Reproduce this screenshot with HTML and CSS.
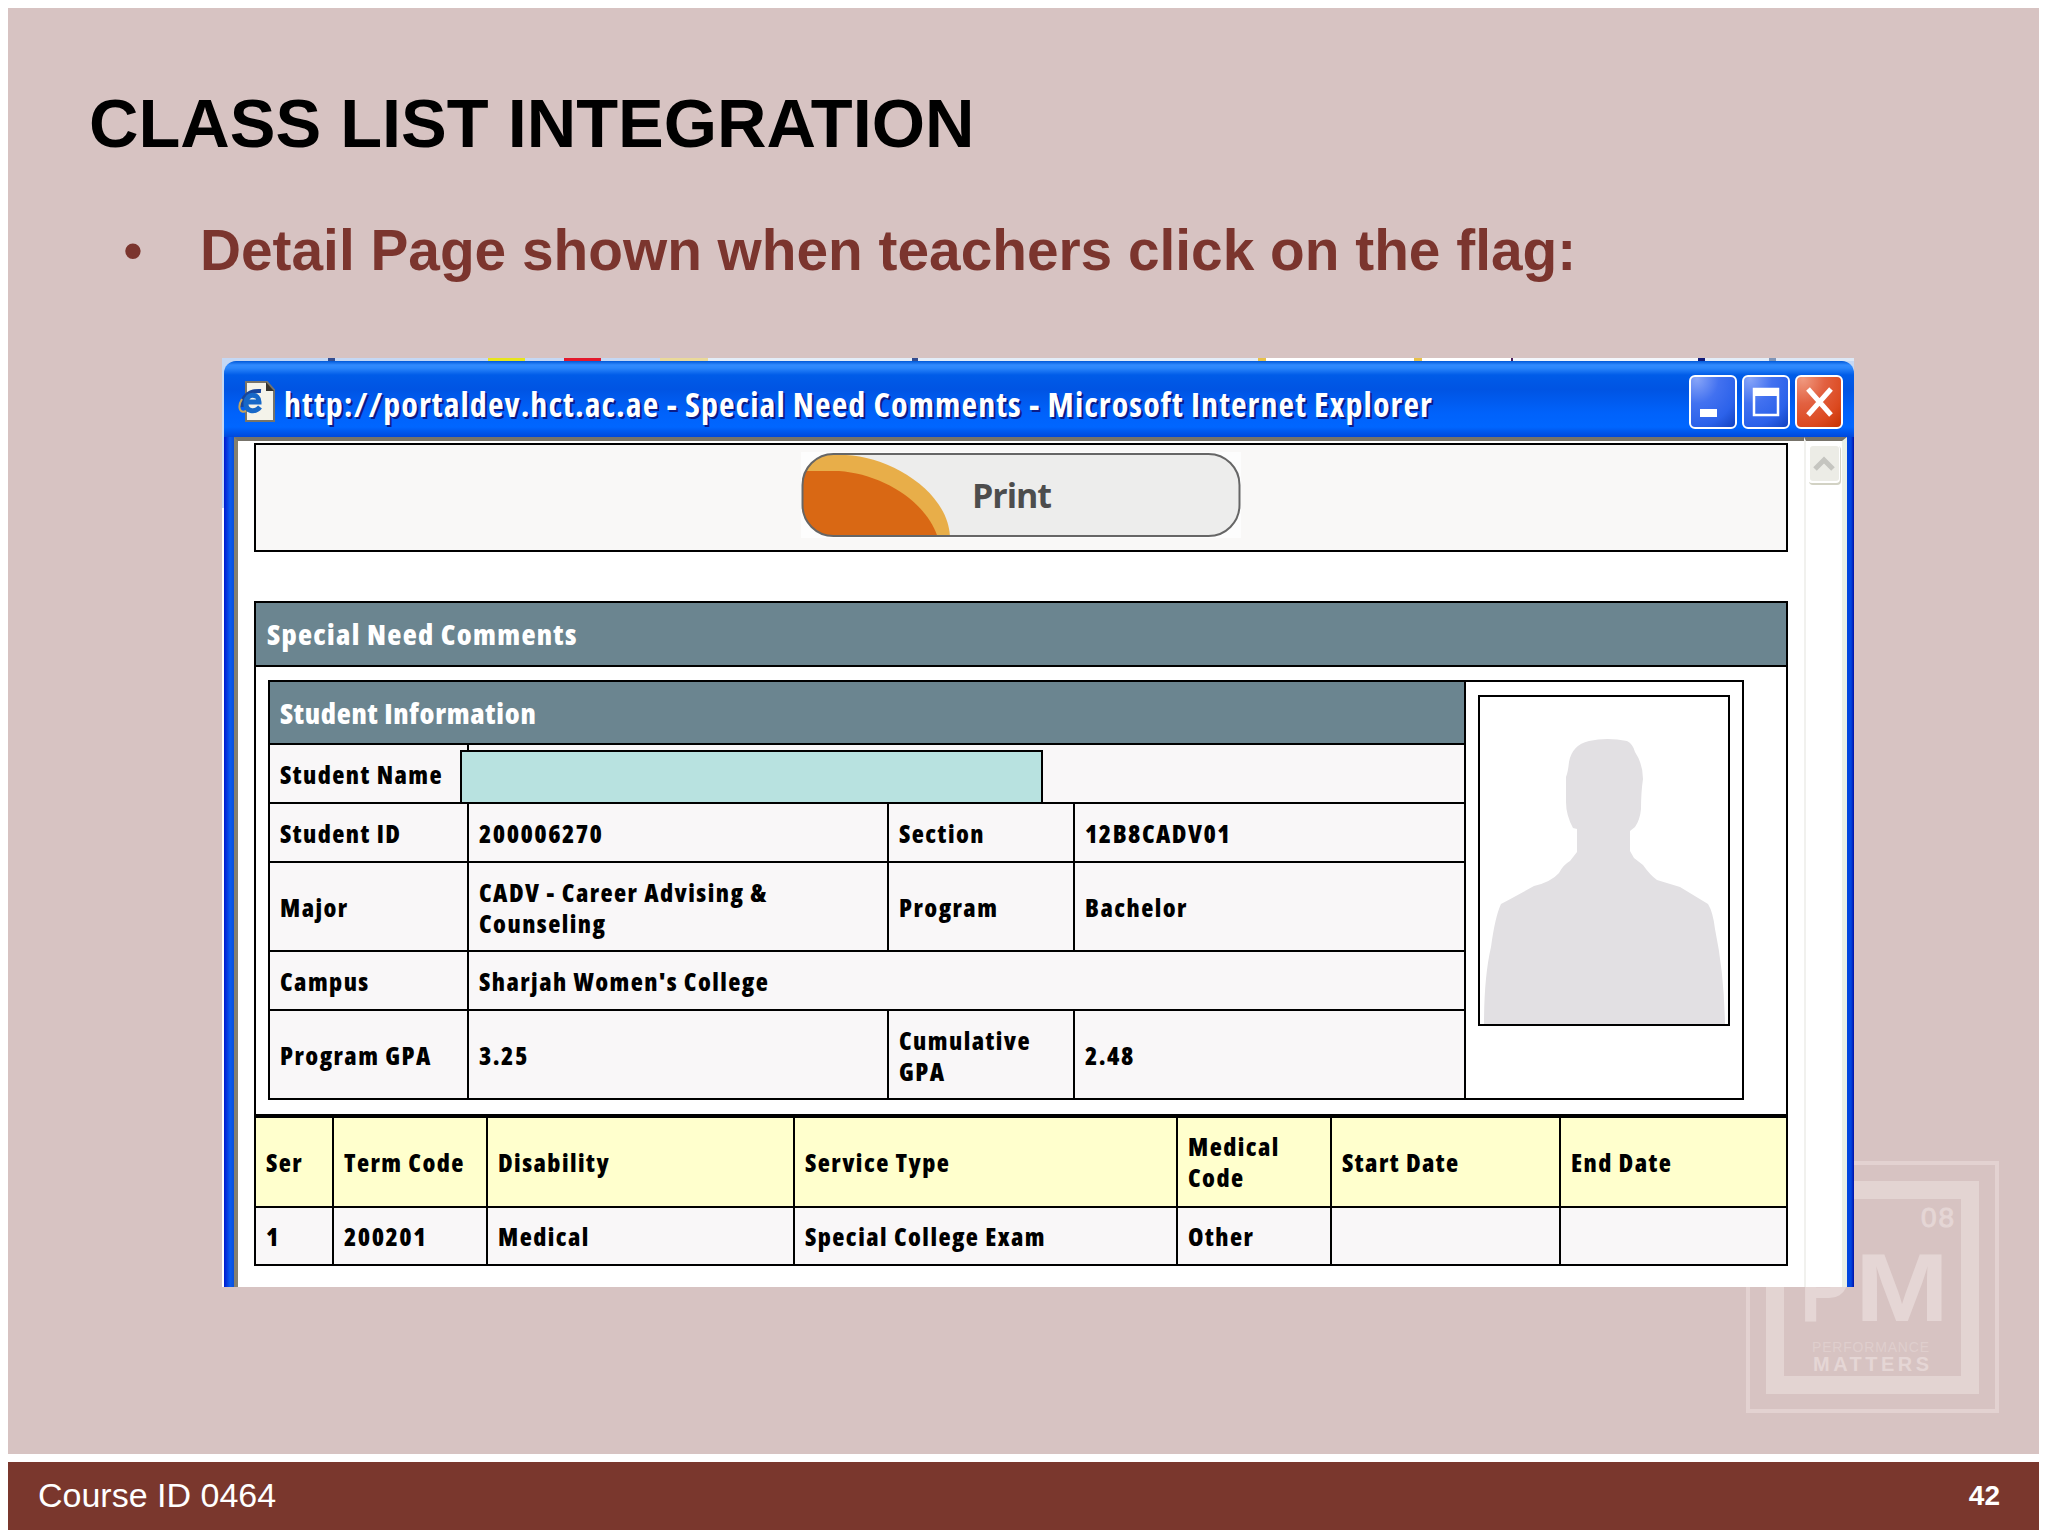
FILE: index.html
```html
<!DOCTYPE html>
<html lang="en">
<head>
  <meta charset="UTF-8" />
  <meta name="viewport" content="width=device-width, initial-scale=1.0"/>
  <title>Class List Integration</title>
  <link rel="stylesheet" href="styles.css">
</head>
<body>

  <main class="slide">
    <!-- PM watermark, sits behind the window -->
    <svg class="watermark" viewBox="0 0 254 254">
      <rect x="2" y="2" width="249" height="248" fill="none" stroke="#e3d2d1" stroke-width="4"/>
      <rect x="29" y="29" width="195" height="195" fill="none" stroke="#e3d4d2" stroke-width="18"/>
      <g fill="#e5d6d5">
        <text x="175" y="66" font-size="28" textLength="33" stroke="#e5d6d5">08</text>
        <text x="54" y="160" font-size="97" font-weight="bold" textLength="51" lengthAdjust="spacingAndGlyphs">P</text>
        <text x="109" y="160" font-size="97" font-weight="bold" textLength="94" lengthAdjust="spacingAndGlyphs">M</text>
        <text x="66" y="191" font-size="14" textLength="117" opacity="0.6">PERFORMANCE</text>
        <text x="67" y="210" font-size="20" font-weight="bold" textLength="116">MATTERS</text>
      </g>
    </svg>

    <h1>CLASS LIST INTEGRATION</h1>
    <ul class="points">
      <li>Detail Page shown when teachers click on the flag:</li>
    </ul>

    <div class="window">
      <div class="behind"></div>
      <div class="titlebar">
        <svg class="ie-icon" viewBox="0 0 37 42">
          <path d="M8 1h21l7 8v31H8z" fill="#f4f3ea" stroke="#77746a" stroke-width="2"/>
          <path d="M28 1v9h8z" fill="#33322e"/>
          <path d="M4 26C3 17 10 9 23 10" fill="none" stroke="#17459c" stroke-width="4"/>
          <path d="M8 21h13c0-9-12-9-13 0c-1 10 9 11 14 5" fill="none" stroke="#1768c8" stroke-width="5"/>
          <path d="M4 18c-5 8-2 15 4 12" fill="none" stroke="#c5a45a" stroke-width="2"/>
        </svg>
        <span class="caption">http://portaldev.hct.ac.ae - Special Need Comments - Microsoft Internet Explorer</span>
        <div class="buttons">
          <svg class="win-btn" viewBox="0 0 48 54"><rect x="1" y="1" width="46" height="52" rx="5" fill="url(#blue)" stroke="#fff" stroke-width="2"/><rect x="11" y="34" width="17" height="8" fill="#fff"/></svg>
          <svg class="win-btn" viewBox="0 0 48 54"><rect x="1" y="1" width="46" height="52" rx="5" fill="url(#blue)" stroke="#fff" stroke-width="2"/><path d="M12 14h24v26H12z" fill="none" stroke="#fff" stroke-width="2.5"/><rect x="11" y="13" width="26" height="8" fill="#fff"/></svg>
          <svg class="win-btn" viewBox="0 0 48 54"><rect x="1" y="1" width="46" height="52" rx="5" fill="url(#red)" stroke="#fff" stroke-width="2"/><path d="M13 14l23 26M36 14L13 40" stroke="#fff" stroke-width="5"/></svg>
        </div>
      </div>

      <div class="viewport">
        <div class="page">
          <div class="print-bar">
            <svg class="print-btn" viewBox="0 0 440 86">
              <rect width="440" height="86" fill="#fdfdfd"/>
              <clipPath id="pill"><rect x="1" y="2" width="437" height="82" rx="31"/></clipPath>
              <g clip-path="url(#pill)">
                <rect width="440" height="86" fill="#ededec"/>
                <path d="M0 3H45C90 5 148 40 149 86H0z" fill="#e8ae49"/>
                <path d="M0 19H38C80 22 125 48 137 86H0z" fill="#d96814"/>
              </g>
              <rect x="1.5" y="2" width="437" height="82" rx="31" fill="none" stroke="#666" stroke-width="2"/>
              <text x="171" y="56" class="print-label" textLength="80">Print</text>
            </svg>
          </div>

          <div class="comments">
            <div class="head">Special Need Comments</div>
            <div class="details">
              <div class="student">
                <div class="head wide">Student Information</div>
                <div class="photo-cell">
                  <svg class="photo" viewBox="0 0 248 327">
                    <path fill="#e2e0e3" d="M109 44Q127 40 147 44Q153 47 155 55Q163 67 163 82Q161 95 161 112Q160 123 155 130L150 134V154L154 161L163 168Q170 178 177 183L200 190L228 207Q233 215 235 232Q244 275 245 327H4Q4 280 11 250Q15 220 21 207Q45 194 54 189Q71 185 79 176Q83 168 90 164L97 155V132L93 131Q86 118 86 105V80Q88 75 89 65Q92 48 109 44z"/>
                  </svg>
                </div>
                <div class="cell">Student Name</div>
                <div class="cell span3 name-cell"><div class="name-mask"></div></div>
                <div class="cell">Student ID</div>
                <div class="cell">200006270</div>
                <div class="cell">Section</div>
                <div class="cell">12B8CADV01</div>
                <div class="cell">Major</div>
                <div class="cell">CADV - Career Advising &amp;<br>Counseling</div>
                <div class="cell">Program</div>
                <div class="cell">Bachelor</div>
                <div class="cell">Campus</div>
                <div class="cell span3">Sharjah Women's College</div>
                <div class="cell">Program GPA</div>
                <div class="cell">3.25</div>
                <div class="cell">Cumulative<br>GPA</div>
                <div class="cell">2.48</div>
              </div>
            </div>
            <div class="services">
              <div class="cell th">Ser</div>
              <div class="cell th">Term Code</div>
              <div class="cell th">Disability</div>
              <div class="cell th">Service Type</div>
              <div class="cell th">Medical<br>Code</div>
              <div class="cell th">Start Date</div>
              <div class="cell th">End Date</div>
              <div class="cell">1</div>
              <div class="cell">200201</div>
              <div class="cell">Medical</div>
              <div class="cell">Special College Exam</div>
              <div class="cell">Other</div>
              <div class="cell"></div>
              <div class="cell"></div>
            </div>
          </div>
        </div>
        <div class="scrollbar">
          <svg class="scroll-up" viewBox="0 0 34 41"><rect x="1" y="1" width="32" height="39" rx="4" fill="#d2d2c4"/><rect x="0" y="0" width="32" height="38" rx="4" fill="#fff"/><rect x="2" y="1" width="29" height="35" rx="3" fill="#ecece6"/><path d="M7 24l9-9l9 9" fill="none" stroke="#c5c5c0" stroke-width="5"/></svg>
        </div>
      </div>
    </div>
  </main>

  <footer class="footer">
    <span>Course ID 0464</span>
    <span class="page-no">42</span>
  </footer>

  <!-- shared gradients for the window buttons -->
  <svg class="defs" width="0" height="0">
    <radialGradient id="blue" cx="0.15" cy="0.05" r="1.2"><stop offset="0" stop-color="#88a5f8"/><stop offset="0.4" stop-color="#4271f0"/><stop offset="0.75" stop-color="#2c62ea"/><stop offset="1" stop-color="#1546c6"/></radialGradient>
    <radialGradient id="red" cx="0.15" cy="0.05" r="1.2"><stop offset="0" stop-color="#f09a80"/><stop offset="0.4" stop-color="#e26141"/><stop offset="0.75" stop-color="#dc4a20"/><stop offset="1" stop-color="#c93505"/></radialGradient>
  </svg>

</body>
</html>
```
FILE: styles.css
```css
* {
  box-sizing: border-box;
}

body {
  margin: 0;
  padding: 8px 9px 0 8px;
  height: 1536px;
  background: #fff;
  font-family: "Liberation Sans", Arial, sans-serif;
  overflow: hidden;
}

.slide {
  position: relative;
  height: 1446px;
  padding: 76px 0 0 214px;
  background: #d7c3c2;
}

h1 {
  margin: 0 0 0 -133px;
  font-size: 68.5px;
  line-height: 80px;
  color: #000;
}

.points {
  margin: 54px 0 0 -99px;
  padding: 0;
  list-style: none;
  font-size: 56.8px;
  font-weight: bold;
  line-height: 66px;
  color: #7b352e;
}

.points li {
  display: flex;
}

.points li::before {
  content: "•";
  width: 77px;
  font-weight: normal;
}

.watermark {
  position: absolute;
  left: 1738px;
  top: 1153px;
  width: 254px;
  height: 254px;
}

/* browser window */
.window {
  position: relative;
  width: 1632px;
  height: 929px;
  margin-top: 74px;
  padding-left: 2px;
  background: linear-gradient(#c5d8f4 0 150px, #fff 150px);
}

/* sliver of the page showing above the window */
.behind {
  height: 3px;
  background: linear-gradient(90deg, transparent 104px, #334d91 104px 111px, transparent 111px 264px, #e7e51c 264px 301px, transparent 301px 340px, #e3182b 340px 377px, transparent 377px 436px, #ead99a 436px 484px, #e3edf8 484px 688px, #334d91 688px 694px, #e3edf8 694px 1034px, #e8c14a 1034px 1042px, #fff 1042px 1190px, #e8c14a 1190px 1198px, #fff 1198px 1287px, #4a1d5c 1287px 1289px, #f3f6fb 1289px 1474px, #101a7a 1474px 1481px, #e3edf8 1481px 1545px, #7f95b8 1545px 1552px, #dde8f6 1552px);
}

.titlebar {
  display: flex;
  align-items: center;
  height: 76px;
  padding: 3px 11px 0 14px;
  border-radius: 12px 12px 0 0;
  background: linear-gradient(#0058d8 0, #318bff 4px, #2b86fb 7px, #005ce8 14px, #0054e3 28px, #0062fb 52px, #0066ff 66px, #0048dc 76px);
}

.ie-icon {
  width: 37px;
  height: 42px;
  margin-top: 2px;
}

.caption {
  flex: 1;
  margin: 6px 0 0 9px;
  font-family: "Open Sans", sans-serif;
  font-stretch: 75%;
  font-size: 34px;
  font-weight: bold;
  letter-spacing: 1.06px;
  white-space: nowrap;
  color: #fff;
  text-shadow: 2px 2px 0 #0a1c88;
}

.buttons {
  display: flex;
  gap: 5px;
  margin-top: 3px;
}

.win-btn {
  width: 48px;
  height: 54px;
}

.viewport {
  display: flex;
  height: 850px;
  border-style: solid;
  border-width: 0 7px 0 10px;
  border-image: linear-gradient(90deg, #0019cf 0, #0a5cf0 6px, #0a4ed8 10px, #0046e0 1627px, #0010a8 1630px) 0 7 0 10;
  background: #fff;
}

.page {
  flex: 1;
  padding: 3px 16px 0;
  border-left: 4px solid #85806f;
  border-top: 4px solid #77736a;
}

.print-bar {
  display: flex;
  justify-content: center;
  height: 109px;
  padding-top: 7px;
  border: 2px solid #000;
  margin-top: -1px;
  background: #f9f8f7;
}

.print-btn {
  width: 440px;
  height: 86px;
}

.print-label {
  font-family: "Open Sans", sans-serif;
  font-size: 34px;
  font-weight: bold;
  fill: #4d4d4d;
}

.comments {
  margin-top: 49px;
  border: 2px solid #000;
  font-family: "Open Sans", sans-serif;
  font-stretch: 75%;
  font-size: 25px;
  font-weight: 800;
  letter-spacing: 1.45px;
  line-height: 31px;
}

.head {
  display: flex;
  align-items: center;
  height: 62px;
  padding: 0 0 2px 11px;
  font-size: 29px;
  font-weight: 800;
  letter-spacing: 1.3px;
  color: #fff;
  background: #6b8590;
}

.details {
  height: 453px;
  padding: 13px 0 0 12px;
  border-top: 2px solid #000;
  border-bottom: 4px solid #000;
}

/* black background shows through the gaps as cell lines */
.student {
  display: grid;
  grid-template-columns: 197px 418px 184px 389px 276px;
  grid-template-rows: 61px 57px 57px 87px 57px 87px;
  gap: 2px;
  width: 1476px;
  border: 2px solid #000;
  background: #000;
}

.student .wide {
  grid-column: 1 / 5;
  height: auto;
  padding: 0 0 0 10px;
  letter-spacing: 0.7px;
}

.photo-cell {
  grid-column: 5;
  grid-row: 1 / 7;
  padding: 13px 12px;
  background: #fff;
}

.photo {
  display: block;
  width: 252px;
  height: 331px;
  border: 2px solid #000;
}

.cell {
  display: flex;
  align-items: center;
  padding: 2px 0 0 10px;
  background: #f9f7f8;
}

.span3 {
  grid-column: span 3;
}

.name-cell {
  position: relative;
}

/* covers the student's name */
.name-mask {
  position: absolute;
  left: -9px;
  top: 5px;
  width: 583px;
  height: 54px;
  border: 2px solid #000;
  background: #b8e2e0;
}

.services {
  display: grid;
  grid-template-columns: 76px 152px 305px 381px 152px 227px 225px;
  grid-template-rows: 88px 56px;
  gap: 2px;
  background: #000;
}

.services .cell {
  padding-top: 0;
}

.services .th {
  background: #ffffcd;
}

.scrollbar {
  width: 43px;
  padding: 4px 0 0 2px;
  border-top: 4px solid #77736a;
  border-left: 2px solid #f1f1ee;
  border-right: 5px solid #eaf0e6;
}

.scroll-up {
  display: block;
  width: 34px;
  height: 41px;
}

.footer {
  display: flex;
  align-items: center;
  justify-content: space-between;
  height: 68px;
  margin-top: 8px;
  padding: 0 39px 2px 30px;
  background: #7a372d;
  color: #fff;
  font-size: 34px;
}

.page-no {
  padding-top: 2px;
  font-size: 28px;
  font-weight: bold;
}

.defs {
  display: block;
}
```
